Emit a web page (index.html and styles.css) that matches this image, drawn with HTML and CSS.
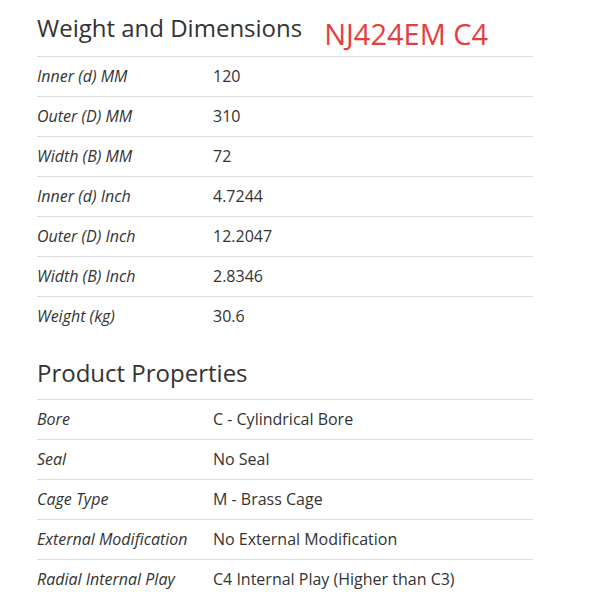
FILE: index.html
```html
<!DOCTYPE html>
<html>
<head>
<meta charset="utf-8">
<link rel="stylesheet" href="styles.css">
</head>
<body>
<div class="page">
  <div class="head">
    <h2 class="title">Weight and Dimensions</h2>
    <span class="part">NJ424EM C4</span>
  </div>
  <div class="table">
    <div class="row"><div class="label">Inner (d) MM</div><div class="value">120</div></div>
    <div class="row"><div class="label">Outer (D) MM</div><div class="value">310</div></div>
    <div class="row"><div class="label">Width (B) MM</div><div class="value">72</div></div>
    <div class="row"><div class="label">Inner (d) Inch</div><div class="value">4.7244</div></div>
    <div class="row"><div class="label">Outer (D) Inch</div><div class="value">12.2047</div></div>
    <div class="row"><div class="label">Width (B) Inch</div><div class="value">2.8346</div></div>
    <div class="row"><div class="label">Weight (kg)</div><div class="value">30.6</div></div>
  </div>
  <h2 class="title second">Product Properties</h2>
  <div class="table">
    <div class="row"><div class="label">Bore</div><div class="value">C - Cylindrical Bore</div></div>
    <div class="row"><div class="label">Seal</div><div class="value">No Seal</div></div>
    <div class="row"><div class="label">Cage Type</div><div class="value">M - Brass Cage</div></div>
    <div class="row"><div class="label">External Modification</div><div class="value">No External Modification</div></div>
    <div class="row"><div class="label">Radial Internal Play</div><div class="value">C4 Internal Play (Higher than C3)</div></div>
  </div>
</div>
</body>
</html>
```
FILE: styles.css
```css
html, body {
  margin: 0;
  padding: 0;
  background: #fff;
}
body {
  font-family: "Open Sans", "Liberation Sans", sans-serif;
  color: #333;
}
.page {
  width: 496px;
  margin-left: 37px;
  padding-top: 13px;
}
.head {
  display: flex;
  align-items: flex-start;
  height: 29px;
  margin-bottom: 14px;
}
.title {
  margin: 0;
  font-size: 24px;
  line-height: 29px;
  font-weight: 400;
  color: #333;
}
.title.second {
  margin-top: 22px;
  margin-bottom: 12px;
}
.part {
  margin-left: 22px;
  margin-top: 6px;
  font-size: 29px;
  line-height: 29px;
  color: #e53e3e;
}
.table {
  display: flex;
  flex-direction: column;
}
.row {
  display: grid;
  grid-template-columns: 176px 1fr;
  border-top: 1px solid #ddd;
  height: 39px;
  line-height: 39px;
  font-size: 16px;
}
.label {
  font-style: italic;
  color: #333;
}
.value {
  color: #333;
}
```
